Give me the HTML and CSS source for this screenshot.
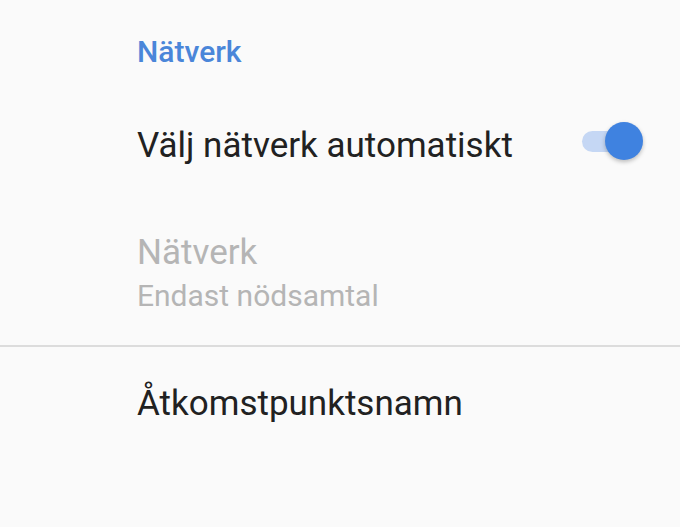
FILE: index.html
```html
<!DOCTYPE html>
<html lang="sv">
<head>
    <meta charset="UTF-8">
    <meta name="viewport" content="width=device-width, initial-scale=1.0">
    <title>Nätverk</title>
    <link rel="stylesheet" href="styles.css">
</head>
<body>
    <div class="screen">
        <div class="group">
            <h2 class="group-title">Nätverk</h2>
            <div class="row toggle-row">
                <div class="row-text">
                    <div class="row-title">Välj nätverk automatiskt</div>
                </div>
                <div class="switch on">
                    <div class="track"></div>
                    <div class="thumb"></div>
                </div>
            </div>
            <div class="row disabled">
                <div class="row-text">
                    <div class="row-title">Nätverk</div>
                    <div class="row-summary">Endast nödsamtal</div>
                </div>
            </div>
        </div>
        <div class="divider"></div>
        <div class="group">
            <div class="row last-row">
                <div class="row-text">
                    <div class="row-title">Åtkomstpunktsnamn</div>
                </div>
            </div>
        </div>
    </div>
</body>
</html>
```

FILE: styles.css
```css
* {
    box-sizing: border-box;
    margin: 0;
    padding: 0;
}

body {
    background-color: #fafafa;
    font-family: Roboto, 'Noto Sans', sans-serif;
    color: #212121;
}

.screen {
    width: 680px;
    height: 527px;
    overflow: hidden;
}

.group-title {
    padding: 34px 0 0 137px;
    font-size: 30px;
    line-height: 36px;
    font-weight: 500;
    color: #4a86d9;
}

.row {
    display: flex;
    align-items: flex-start;
    padding: 0 37px 0 137px;
}

.row-text {
    flex: 1;
}

.row-title {
    font-size: 35px;
    line-height: 42px;
}

.row-summary {
    font-size: 30px;
    line-height: 44px;
}

.toggle-row {
    padding-top: 55px;
    padding-bottom: 65px;
}

.row.disabled {
    padding-bottom: 27px;
}

.row.disabled .row-title,
.row.disabled .row-summary {
    color: #b5b5b5;
}

.last-row {
    padding-top: 36px;
}

.divider {
    height: 2px;
    background-color: #dcdcdc;
}

.switch {
    position: relative;
    width: 61px;
    height: 38px;
    margin-top: -3px;
}

.track {
    position: absolute;
    left: 0;
    top: 9px;
    width: 52px;
    height: 21px;
    border-radius: 11px;
    background-color: #c5d7f4;
}

.thumb {
    position: absolute;
    right: 0;
    top: 0;
    width: 38px;
    height: 38px;
    border-radius: 50%;
    background-color: #3f82e0;
    box-shadow: 0 2px 4px rgba(0, 0, 0, 0.25);
}
```
